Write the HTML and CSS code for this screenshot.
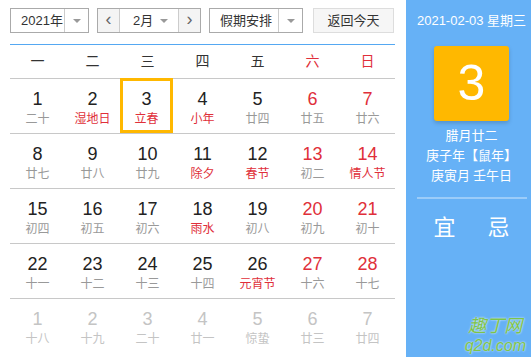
FILE: index.html
```html
<!DOCTYPE html>
<html>
<head lang="zh">
    <meta charset="UTF-8">
    <title>万年历</title>
    <link rel="stylesheet" href="styles.css">
</head>
<body>
<div class="calendar">
    <div class="main">
        <div class="toolbar">
            <div class="select sel-year"><span class="val">2021年</span><span class="caret"></span></div>
            <div class="select sel-month">
                <span class="arrow">&lsaquo;</span>
                <span class="val">2月</span><span class="caret plain"></span>
                <span class="arrow">&rsaquo;</span>
            </div>
            <div class="select sel-holiday"><span class="val">假期安排</span><span class="caret"></span></div>
            <div class="btn-today">返回今天</div>
        </div>
        <div class="week">
            <span>一</span><span>二</span><span>三</span><span>四</span><span>五</span>
            <span class="red">六</span><span class="red">日</span>
        </div>
        <div class="row">
            <div class="day"><b>1</b><i>二十</i></div>
            <div class="day"><b>2</b><i class="fest">湿地日</i></div>
            <div class="day on"><b>3</b><i class="fest">立春</i></div>
            <div class="day"><b>4</b><i class="fest">小年</i></div>
            <div class="day"><b>5</b><i>廿四</i></div>
            <div class="day wknd"><b>6</b><i>廿五</i></div>
            <div class="day wknd"><b>7</b><i>廿六</i></div>
        </div>
        <div class="row">
            <div class="day"><b>8</b><i>廿七</i></div>
            <div class="day"><b>9</b><i>廿八</i></div>
            <div class="day"><b>10</b><i>廿九</i></div>
            <div class="day"><b>11</b><i class="fest">除夕</i></div>
            <div class="day"><b>12</b><i class="fest">春节</i></div>
            <div class="day wknd"><b>13</b><i>初二</i></div>
            <div class="day wknd"><b>14</b><i class="fest">情人节</i></div>
        </div>
        <div class="row">
            <div class="day"><b>15</b><i>初四</i></div>
            <div class="day"><b>16</b><i>初五</i></div>
            <div class="day"><b>17</b><i>初六</i></div>
            <div class="day"><b>18</b><i class="fest">雨水</i></div>
            <div class="day"><b>19</b><i>初八</i></div>
            <div class="day wknd"><b>20</b><i>初九</i></div>
            <div class="day wknd"><b>21</b><i>初十</i></div>
        </div>
        <div class="row">
            <div class="day"><b>22</b><i>十一</i></div>
            <div class="day"><b>23</b><i>十二</i></div>
            <div class="day"><b>24</b><i>十三</i></div>
            <div class="day"><b>25</b><i>十四</i></div>
            <div class="day"><b>26</b><i class="fest">元宵节</i></div>
            <div class="day wknd"><b>27</b><i>十六</i></div>
            <div class="day wknd"><b>28</b><i>十七</i></div>
        </div>
        <div class="row last">
            <div class="day other"><b>1</b><i>十八</i></div>
            <div class="day other"><b>2</b><i>十九</i></div>
            <div class="day other"><b>3</b><i>二十</i></div>
            <div class="day other"><b>4</b><i>廿一</i></div>
            <div class="day other"><b>5</b><i>惊蛰</i></div>
            <div class="day other"><b>6</b><i>廿三</i></div>
            <div class="day other"><b>7</b><i>廿四</i></div>
        </div>
    </div>
    <div class="side">
        <div class="side-date">2021-02-03 星期三</div>
        <div class="side-big">3</div>
        <div class="side-lunar">
            <p>腊月廿二</p>
            <p>庚子年【鼠年】</p>
            <p>庚寅月 壬午日</p>
        </div>
        <div class="side-line"></div>
        <div class="side-yiji"><span>宜</span><span>忌</span></div>
        <div class="mark"><span class="mark-cn">趣丁网</span><span class="mark-en">q2d.com</span></div>
    </div>
</div>
</body>
</html>
```

FILE: styles.css
```css
*{
    margin:0;
    padding:0;
    box-sizing: border-box;
}
body{
    font-family: "Liberation Sans", "Noto Sans CJK SC", sans-serif;
    color:#222;
    background:#fff;
}
i,b{
    font-style: normal;
    font-weight: normal;
}
.calendar{
    display:flex;
    width:531px;
    height:357px;
}
.main{
    width:406px;
    padding:8px 11px 0 10px;
}

/*工具栏*/
.toolbar{
    display:flex;
    height:25px;
    font-size:13px;
}
.select{
    display:flex;
    border:1px solid #aaa;
    height:25px;
    line-height:23px;
    color:#333;
}
.select .val{
    padding-left:10px;
    flex:1;
}
.caret{
    width:24px;
    border-left:1px solid #ccc;
    position:relative;
}
.caret:after{
    content:'';
    position:absolute;
    left:8px;top:10px;
    border:4px solid transparent;
    border-top:4px solid #999;
    border-bottom:0;
}
.caret.plain{
    border-left:0;
    width:24px;
}
.caret.plain:after{
    left:6px;
}
.sel-year{
    width:79px;
}
.sel-month{
    width:104px;
    margin-left:8px;
}
.sel-month .val{
    padding-left:13px;
}
.sel-month .arrow{
    width:22px;
    text-align:center;
    background:#f4f4f4;
    color:#666;
    font-size:18px;
    line-height:21px;
}
.sel-month .arrow:first-child{
    border-right:1px solid #ccc;
}
.sel-month .arrow:last-child{
    border-left:1px solid #ccc;
}
.sel-holiday{
    width:94px;
    margin-left:8px;
}
.sel-holiday .val{
    padding-left:10px;
}
.btn-today{
    width:81px;
    margin-left:10px;
    height:25px;
    line-height:23px;
    border:1px solid #ddd;
    background:#f6f6f6;
    text-align:center;
    color:#333;
}

/*星期*/
.week{
    display:flex;
    margin-top:11px;
    border-top:1px solid #55a8f2;
    border-bottom:1px solid #c8c8c8;
    height:35px;
    line-height:33px;
    font-size:14px;
    color:#333;
}
.week span{
    width:55px;
    text-align:center;
}
.red{
    color:#e02f3a;
}

/*日期*/
.row{
    display:flex;
    height:55px;
    border-bottom:1px solid #c8c8c8;
}
.row.last{
    border-bottom:0;
}
.day{
    width:55px;
    display:flex;
    flex-direction:column;
    align-items:center;
    padding-top:9px;
}
.day b{
    font-size:18px;
    line-height:22px;
}
.day i{
    font-size:12px;
    line-height:16px;
    color:#999;
    font-family: "Noto Sans CJK SC", sans-serif;
}
.day i.fest{
    color:#e02f3a;
}
.day.wknd b{
    color:#e02f3a;
}
.day.on{
    width:53px;
    margin-right:2px;
    margin-top:-1px;
    height:55px;
    border:3px solid #ffb800;
    padding-top:7px;
}
.day.other b,
.day.other i{
    color:#c4c4c4;
}

/*右侧*/
.side{
    position:relative;
    width:125px;
    background:#66b1f6;
    color:#fff;
    padding:12px 0 0 6px;
    display:flex;
    flex-direction:column;
    align-items:center;
}
.side-date{
    font-size:13px;
    line-height:18px;
    white-space:nowrap;
}
.side-big{
    width:75px;
    height:75px;
    margin-top:16px;
    background:#ffb800;
    border-radius:3px;
    box-shadow:0 2px 4px rgba(0,0,0,.18);
    font-size:50px;
    line-height:75px;
    text-align:center;
}
.side-lunar{
    margin-top:4px;
    text-align:center;
    font-size:13px;
    line-height:20px;
    font-family: "Noto Sans CJK SC", sans-serif;
}
.side-line{
    width:110px;
    height:2px;
    margin-top:12px;
    background:rgba(255,255,255,.35);
}
.side-yiji{
    display:flex;
    margin-top:11px;
    font-size:22px;
    line-height:30px;
    font-family: "Noto Sans CJK SC", sans-serif;
}
.side-yiji span{
    width:54px;
    text-align:center;
}

/*水印*/
.mark{
    position:absolute;
    right:5px;
    bottom:2px;
    display:flex;
    flex-direction:column;
    align-items:center;
    color:#7cc44a;
    font-style:italic;
    text-shadow:0 0 2px #fff;
}
.mark-cn{
    font-size:18px;
    font-family: "Noto Sans CJK SC", sans-serif;
}
.mark-en{
    font-size:16px;
}
```
